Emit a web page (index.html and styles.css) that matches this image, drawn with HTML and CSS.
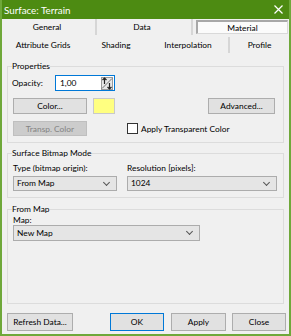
FILE: index.html
```html
<!DOCTYPE html>
<html>
<head>
  <meta charset="UTF-8">
  <title>Surface: Terrain</title>
  <link rel="stylesheet" href="styles.css">
</head>
<body>
  <div class="window">
    <div class="titlebar">
      <span class="title">Surface: Terrain</span>
      <svg class="close" width="9" height="9" viewBox="0 0 9 9"><path d="M0.5 0.5 L8.5 8.5 M8.5 0.5 L0.5 8.5" stroke="#fff" stroke-width="1.2"/></svg>
    </div>

    <!-- tab strip, two rows -->
    <div class="tab-row row1">
      <div class="tab t-general">General</div>
      <div class="tab t-data">Data</div>
      <div class="tab t-material active">Material</div>
    </div>
    <div class="tab-row row2">
      <div class="tab t-attr">Attribute Grids</div>
      <div class="tab t-shading">Shading</div>
      <div class="tab t-interp">Interpolation</div>
      <div class="tab t-profile">Profile</div>
    </div>

    <div class="page">
      <fieldset class="group g-props">
        <legend>Properties</legend>
        <div class="row r-opacity">
          <span class="lbl">Opacity:</span>
          <div class="spin">
            <span class="spin-val">1,00</span>
            <span class="spin-btn">
              <svg width="12" height="13" viewBox="0 0 12 13">
                <path d="M3.5 1 L3.5 7 M1.5 3 L3.5 1 L5.5 3" stroke="#222" stroke-width="1.2" fill="none"/>
                <path d="M1 11.5 L11 1.5" stroke="#555" stroke-width="0.8"/>
                <path d="M8.5 6 L8.5 12 M6.5 10 L8.5 12 L10.5 10" stroke="#222" stroke-width="1.2" fill="none"/>
              </svg>
            </span>
          </div>
        </div>
        <div class="row r-color">
          <button class="btn b-color">Color...</button>
          <span class="swatch"></span>
          <button class="btn b-adv">Advanced...</button>
        </div>
        <div class="row r-transp">
          <button class="btn b-transp" disabled>Transp. Color</button>
          <span class="check"><span class="check-box"></span>Apply Transparent Color</span>
        </div>
      </fieldset>

      <fieldset class="group g-bitmap">
        <legend>Surface Bitmap Mode</legend>
        <div class="cols">
          <div class="col c-type">
            <span class="lbl">Type (bitmap origin):</span>
            <div class="select">From Map<span class="chev"></span></div>
          </div>
          <div class="col c-res">
            <span class="lbl">Resolution [pixels]:</span>
            <div class="select">1024<span class="chev"></span></div>
          </div>
        </div>
      </fieldset>

      <fieldset class="group g-map">
        <legend>From Map</legend>
        <span class="lbl">Map:</span>
        <div class="select s-map">New Map<span class="chev"></span></div>
      </fieldset>
    </div>

    <div class="footer">
      <button class="btn b-refresh">Refresh Data...</button>
      <button class="btn b-ok">OK</button>
      <button class="btn b-apply">Apply</button>
      <button class="btn b-close">Close</button>
    </div>
  </div>
</body>
</html>
```

FILE: styles.css
```css
/* dialog frame */
body { margin: 0; background: #f0f0f0; }
.window {
  width: 287px;
  height: 334px;
  border: 2px solid #6fa83a;
  border-top: 0;
  background: #f0f0f0;
  font-family: Lato, "Noto Sans", sans-serif;
  font-size: 8.4px;
  color: #000;
  overflow: hidden;
}
.titlebar {
  height: 19px;
  margin: 0 -2px;
  padding: 0 8px 0 4px;
  background: #4d8b12;
  display: flex;
  align-items: center;
  justify-content: space-between;
}
.title { color: #fff; font-size: 9.8px; }
.close { display: block; }

/*************
 * tab strip *
 *************/
.tab-row { display: flex; }
.row1 { height: 16px; }
.row2 { height: 18px; }
.tab {
  display: flex;
  align-items: center;
  justify-content: center;
  box-sizing: border-box;
}
.t-general  { width: 95px; border-right: 2px solid #d6d6d6; padding-right: 3px; }
.t-data     { width: 96px; border-right: 2px solid #d6d6d6; padding-right: 4px; }
.t-material { width: 92px; margin: 1px 0 1px 3px; }
.tab.active {
  background: #fbfbfb;
  border: 1px solid #d9d9d9;
  border-top: 2px solid #a8a8a8;
  border-left: 2px solid #a8a8a8;
}
.row2 .tab { margin-top: 2px; }
.t-attr    { width: 82px; }
.t-shading { width: 64px; }
.t-interp  { width: 82px; border-right: 2px solid #d6d6d6; }
.t-profile { width: 59px; }

/***************
 * group boxes *
 ***************/
.page { padding-left: 5px; }
.group {
  width: 277px;
  margin: 0;
  padding: 0 4px 6px 5px;
  box-sizing: border-box;
  border: 1px solid #dcdcdc;
}
.group legend {
  padding: 0;
  margin-left: -1px;
  line-height: 12px;
  height: 12px;
}
.g-props  { margin-top: 7px; }
.g-bitmap { margin-top: 4px; }
.g-map    { margin-top: 5px; padding-bottom: 62px; }

.row { display: flex; align-items: center; }
.r-opacity { margin-top: 3px; height: 16px; }
.r-color   { margin-top: 7px; height: 16px; }
.r-transp  { margin-top: 7px; height: 15px; }
.lbl { line-height: 11px; height: 11px; display: block; }
.r-opacity .lbl { margin-left: -1px; width: 43px; }

.spin {
  width: 60px;
  height: 16px;
  box-sizing: border-box;
  border: 1px solid #0078d7;
  background: #fff;
  display: flex;
  align-items: center;
  justify-content: space-between;
  padding: 0 1px 0 4px;
}
.spin-btn {
  width: 12px;
  height: 13px;
  background: #e8e8e8;
  border: 1px solid #9a9a9a;
  box-sizing: border-box;
  display: flex;
}
.spin-btn svg { margin: -1px; }

/* buttons */
.btn {
  font: inherit;
  color: #000;
  background: #e1e1e1;
  border: 1px solid #adadad;
  padding: 0;
  box-sizing: border-box;
  height: 16px;
}
.b-color  { width: 74px; }
.b-adv    { width: 67px; margin-left: auto; margin-right: 4px; }
.b-transp { width: 74px; height: 15px; background: #cccccc; border-color: #bfbfbf; color: #838383; }
.swatch {
  width: 22px;
  height: 16px;
  box-sizing: border-box;
  margin-left: 6px;
  background: #ffff80;
  border: 1px solid #c9c9c9;
}
.check { display: flex; align-items: center; margin-left: 40px; }
.check-box {
  width: 11px;
  height: 11px;
  box-sizing: border-box;
  border: 1px solid #333;
  background: #fff;
  margin-right: 3px;
}

/* drop-down lists */
.cols { display: flex; gap: 10px; margin-top: 4px; }
.c-type { width: 104px; }
.c-res  { width: 150px; }
.select {
  position: relative;
  height: 15px;
  margin-top: 2px;
  box-sizing: border-box;
  border: 1px solid #acacac;
  background: #e5e5e5;
  padding-left: 3px;
  line-height: 13px;
}
.chev {
  position: absolute;
  right: 7px;
  top: 3px;
  width: 4px;
  height: 4px;
  border-right: 1px solid #555;
  border-bottom: 1px solid #555;
  transform: rotate(45deg);
}
.s-map { width: 187px; height: 16px; margin-top: -1px; line-height: 14px; }

/* bottom buttons */
.footer { display: flex; margin-top: 9px; padding-left: 5px; }
.footer .btn { height: 18px; }
.b-refresh { width: 66px; }
.b-ok      { width: 54px; margin-left: 37px; border-color: #0078d7; }
.b-apply   { width: 55px; margin-left: 7px; }
.b-close   { width: 54px; margin-left: 6px; }
```
